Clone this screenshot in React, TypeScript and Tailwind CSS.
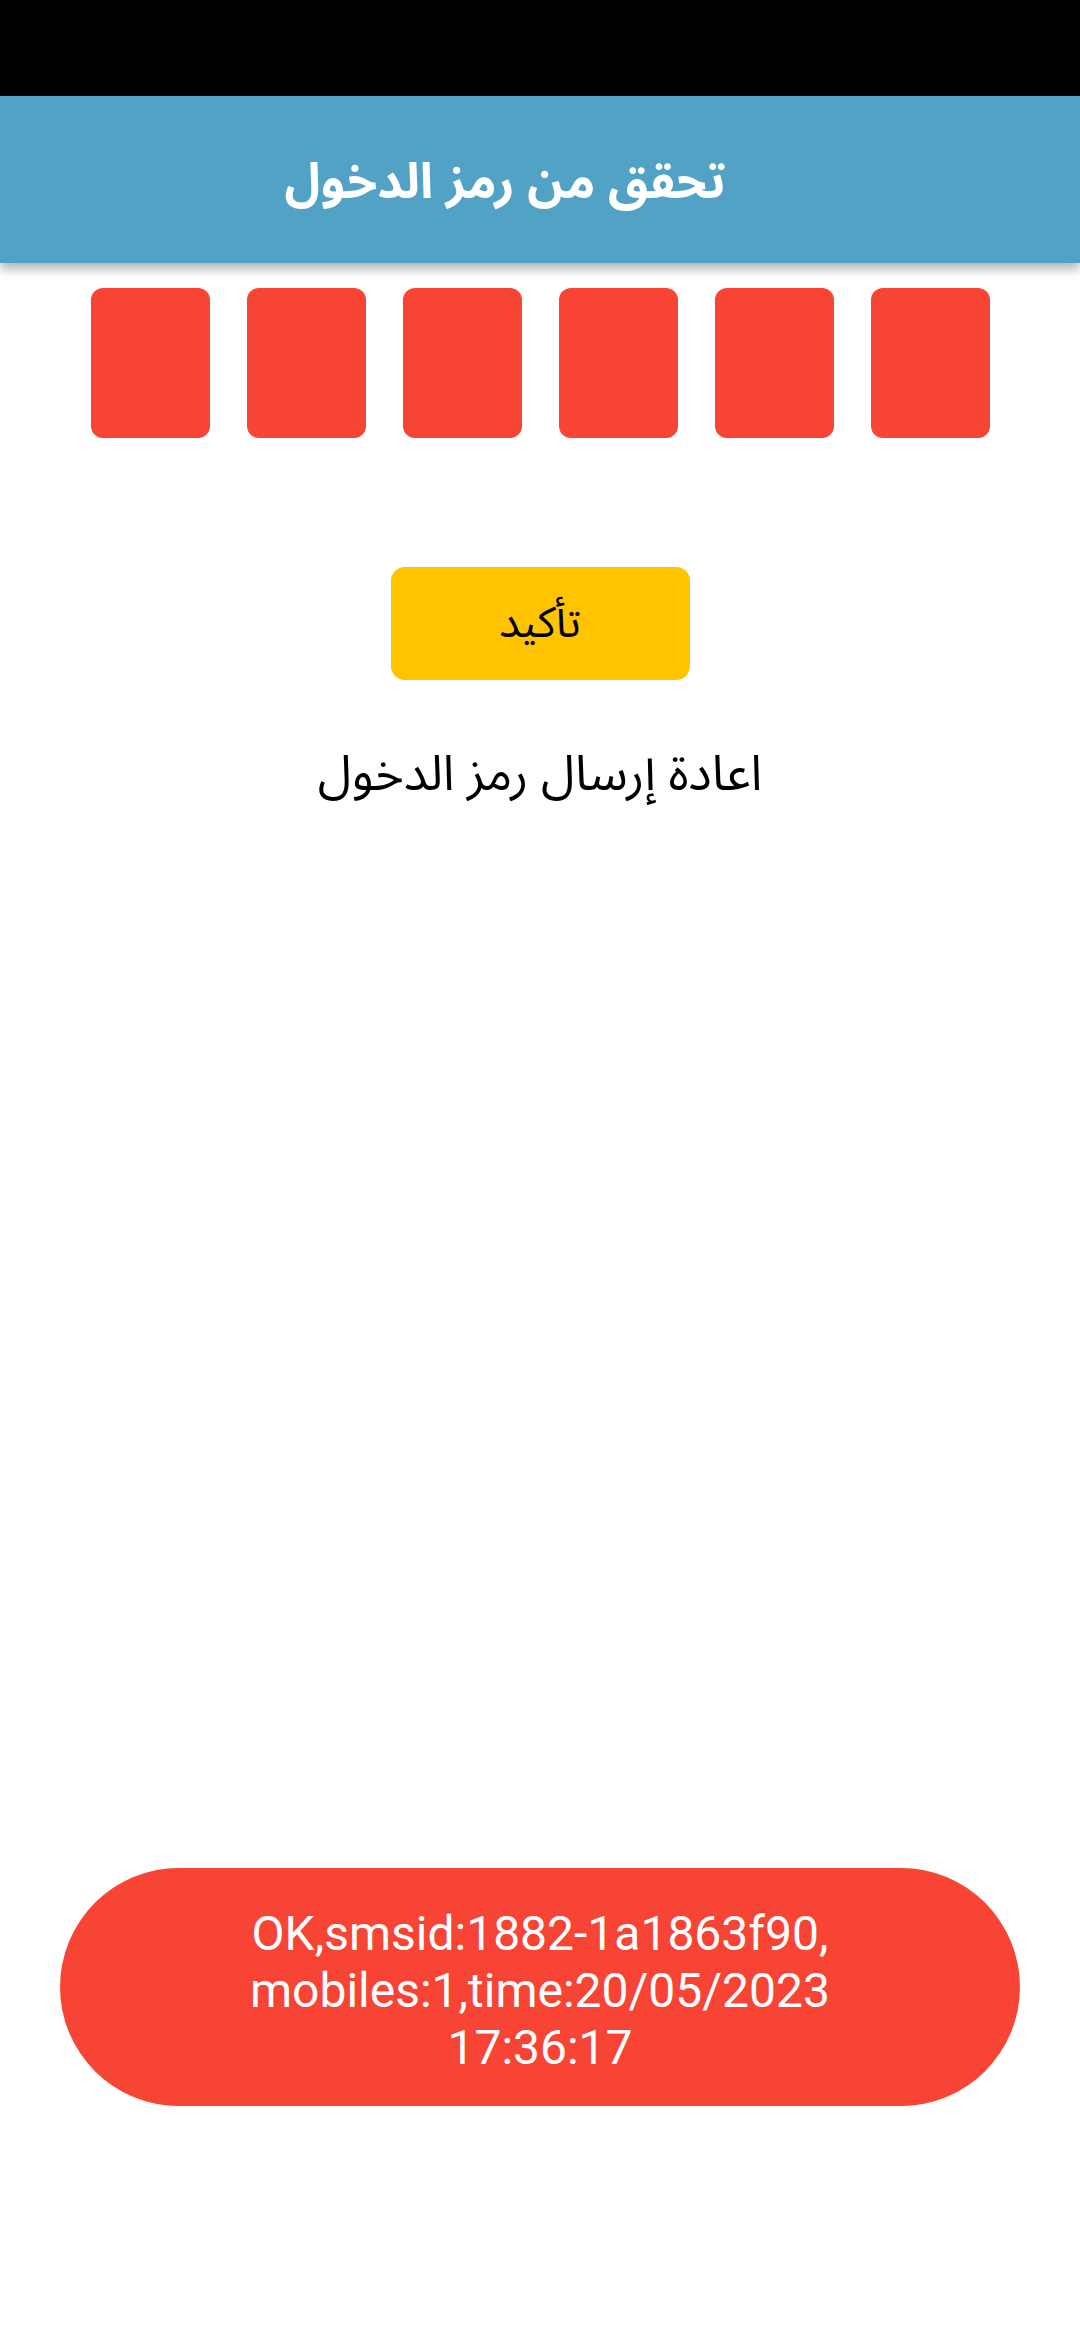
import React from "react";

export default function App() {
  const boxes = [0, 1, 2, 3, 4, 5];
  return (
    <div className="w-[1080px] h-[2340px] bg-white flex flex-col relative overflow-hidden" style={{ fontFamily: '"Noto Sans Arabic", "DejaVu Sans", sans-serif' }}>
      <div className="h-[96px] bg-black shrink-0" />
      <div className="h-[167px] bg-[#52a2c6] shrink-0 flex items-center justify-center pr-[70px] pt-[6px] shadow-[0_6px_10px_rgba(0,0,0,0.3)] relative z-10">
        <span dir="rtl" className="text-white text-[49px] font-bold leading-none">تحقق من رمز الدخول</span>
      </div>
      <div className="flex justify-center gap-[37px] mt-[25px]">
        {boxes.map((b) => (
          <div key={b} className="w-[119px] h-[150px] rounded-[12px] bg-[#f74434]" />
        ))}
      </div>
      <div className="flex justify-center mt-[129px]">
        <div className="w-[299px] h-[113px] rounded-[14px] bg-[#ffc300] flex items-center justify-center">
          <span dir="rtl" className="text-black text-[43px] leading-none">تأكيد</span>
        </div>
      </div>
      <div className="flex justify-center mt-[70px]">
        <span dir="rtl" className="text-black text-[49px] leading-none">اعادة إرسال رمز الدخول</span>
      </div>
      <div className="absolute left-[60px] top-[1868px] w-[960px] h-[238px] rounded-full bg-[#f74434] flex items-center justify-center px-[80px] pt-[6px]">
        <p className="text-white text-[48px] leading-[57px] text-center" style={{ fontFamily: 'Roboto, "Liberation Sans", sans-serif' }}>
          OK,smsid:1882-1a1863f90,<br />mobiles:1,time:20/05/2023<br />17:36:17
        </p>
      </div>
    </div>
  );
}
